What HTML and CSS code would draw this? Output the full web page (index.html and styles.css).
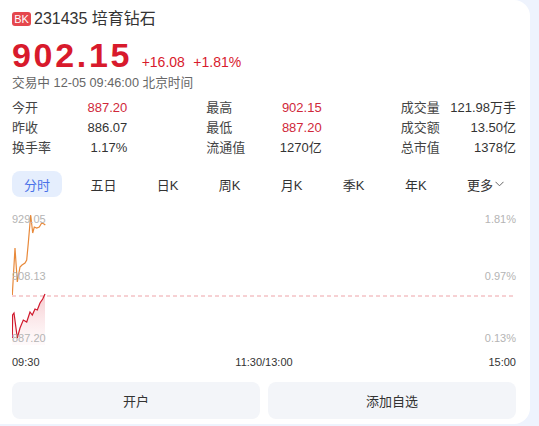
FILE: index.html
```html
<!doctype html>
<html lang="zh-CN">
  <head>
    <meta charset="UTF-8" />
    <meta name="viewport" content="width=device-width, initial-scale=1.0" />
    <title>培育钻石</title>
    <link rel="stylesheet" href="styles.css">
  </head>
  <body>
    <div class="card">
      <div class="title">
        <span class="badge">BK</span>
        <span class="name">231435 培育钻石</span>
      </div>

      <div class="price-row">
        <span class="price">902.15</span>
        <span class="change">+16.08</span>
        <span class="change">+1.81%</span>
      </div>
      <div class="status">交易中 12-05 09:46:00 北京时间</div>

      <div class="stats">
        <div class="stat"><span class="label">今开</span><span class="value up">887.20</span></div>
        <div class="stat"><span class="label">最高</span><span class="value up">902.15</span></div>
        <div class="stat"><span class="label">成交量</span><span class="value">121.98万手</span></div>
        <div class="stat"><span class="label">昨收</span><span class="value">886.07</span></div>
        <div class="stat"><span class="label">最低</span><span class="value up">887.20</span></div>
        <div class="stat"><span class="label">成交额</span><span class="value">13.50亿</span></div>
        <div class="stat"><span class="label">换手率</span><span class="value">1.17%</span></div>
        <div class="stat"><span class="label">流通值</span><span class="value">1270亿</span></div>
        <div class="stat"><span class="label">总市值</span><span class="value">1378亿</span></div>
      </div>

      <div class="tabs">
        <span class="tab active">分时</span>
        <span class="tab">五日</span>
        <span class="tab">日K</span>
        <span class="tab">周K</span>
        <span class="tab">月K</span>
        <span class="tab">季K</span>
        <span class="tab">年K</span>
        <span class="tab">更多<svg class="chev" width="9" height="6" viewBox="0 0 9 6"><path d="M0.5 0.8 L4.5 4.8 L8.5 0.8" fill="none" stroke="#666" stroke-width="1"/></svg></span>
      </div>

      <div class="chart">
        <svg width="504" height="142" viewBox="0 0 504 142">
          <defs>
            <linearGradient id="fill" x1="0" y1="0" x2="0" y2="1">
              <stop offset="0" stop-color="#f3b8be" stop-opacity="0.75"/>
              <stop offset="1" stop-color="#fbe6e8" stop-opacity="0.2"/>
            </linearGradient>
          </defs>
          <line x1="0" y1="90" x2="504" y2="90" stroke="#eea3a8" stroke-width="1" stroke-dasharray="4 3"/>
          <path d="M0.3 132 L0.6 109 L2 107 L5.3 132 L8 122 L11.3 114 L14.7 116 L18 106 L20.3 109 L23 103 L25.3 104 L28 97 L30.7 93 L33 88 L33 139 L0.3 139 Z" fill="url(#fill)"/>
          <path d="M0.3 132 L0.6 109 L2 107 L5.3 132 L8 122 L11.3 114 L14.7 116 L18 106 L20.3 109 L23 103 L25.3 104 L28 97 L30.7 93 L33 88" fill="none" stroke="#d0182c" stroke-width="1.2"/>
          <path d="M0.3 89 L3 42 L5.3 76 L8 61 L10 59 L13 57 L14.7 54 L16.3 37 L18.7 9 L20.7 27 L22.3 21 L24.7 22 L27.3 21 L29.7 17 L32 18 L33.3 19" fill="none" stroke="#e8893a" stroke-width="1.2"/>
        </svg>
        <span class="axis left top">929.05</span>
        <span class="axis left mid">908.13</span>
        <span class="axis left bottom">887.20</span>
        <span class="axis right top">1.81%</span>
        <span class="axis right mid">0.97%</span>
        <span class="axis right bottom">0.13%</span>
      </div>

      <div class="times">
        <span>09:30</span>
        <span>11:30/13:00</span>
        <span>15:00</span>
      </div>

      <div class="actions">
        <button type="button">开户</button>
        <button type="button">添加自选</button>
      </div>
    </div>
  </body>
</html>
```

FILE: styles.css
```css
body {
  font-family: "Liberation Sans", Arial, "Noto Sans CJK SC", sans-serif;
  background-color: #eef3fd;
  margin: 0;
  padding: 0;
  color: #333;
}
.card {
  background-color: #ffffff;
  width: 530px;
  height: 424px;
  box-sizing: border-box;
  padding: 11px 14px 0 12px;
  border-radius: 0 16px 16px 0;
}
.title {
  display: flex;
  align-items: center;
  height: 16px;
}
.badge {
  background-color: #e5474d;
  color: #fff;
  font-size: 11px;
  line-height: 14px;
  width: 19px;
  text-align: center;
  border-radius: 3px;
  margin-right: 3px;
}
.name {
  font-size: 16px;
  line-height: 16px;
  color: #333;
}
.price-row {
  margin-top: 11px;
  height: 34px;
  line-height: 34px;
  color: #d81a2c;
}
.price {
  font-size: 34px;
  font-weight: bold;
  letter-spacing: 2.7px;
  margin-right: 5px;
}
.change {
  font-size: 14px;
  margin-right: 4px;
}
.status {
  margin-top: 3px;
  font-size: 12.7px;
  line-height: 16px;
  color: #666;
}
.stats {
  margin-top: 7px;
  display: grid;
  grid-template-columns: repeat(3, 1fr);
  column-gap: 79px;
}
.stat {
  display: flex;
  justify-content: space-between;
  font-size: 13px;
  line-height: 20px;
}
.label {
  color: #444;
}
.value {
  color: #333;
}
.value.up {
  color: #d0283a;
}
.tabs {
  margin-top: 13px;
  display: flex;
  justify-content: space-between;
}
.tab {
  display: flex;
  align-items: center;
  height: 26px;
  padding: 0 12px;
  font-size: 13px;
  color: #333;
  border-radius: 8px;
}
.tab.active {
  background-color: #e5eefd;
  color: #4a72e8;
}
.chev {
  margin-left: 2px;
}
.chart {
  position: relative;
  margin-top: 9px;
  height: 142px;
}
.chart svg {
  display: block;
}
.axis {
  position: absolute;
  font-size: 11px;
  line-height: 12px;
  color: #b4b4b4;
}
.axis.left {
  left: 0;
}
.axis.right {
  right: 0;
}
.axis.top {
  top: 7px;
}
.axis.mid {
  top: 64px;
}
.axis.bottom {
  top: 126px;
}
.times {
  margin-top: 7px;
  display: flex;
  justify-content: space-between;
  font-size: 11px;
  line-height: 14px;
  color: #333;
}
.actions {
  margin-top: 13px;
  display: grid;
  grid-template-columns: 1fr 1fr;
  gap: 8px;
}
button {
  height: 37px;
  border: none;
  border-radius: 8px;
  background-color: #f3f5f9;
  font-family: inherit;
  font-size: 13px;
  color: #333;
}
```
